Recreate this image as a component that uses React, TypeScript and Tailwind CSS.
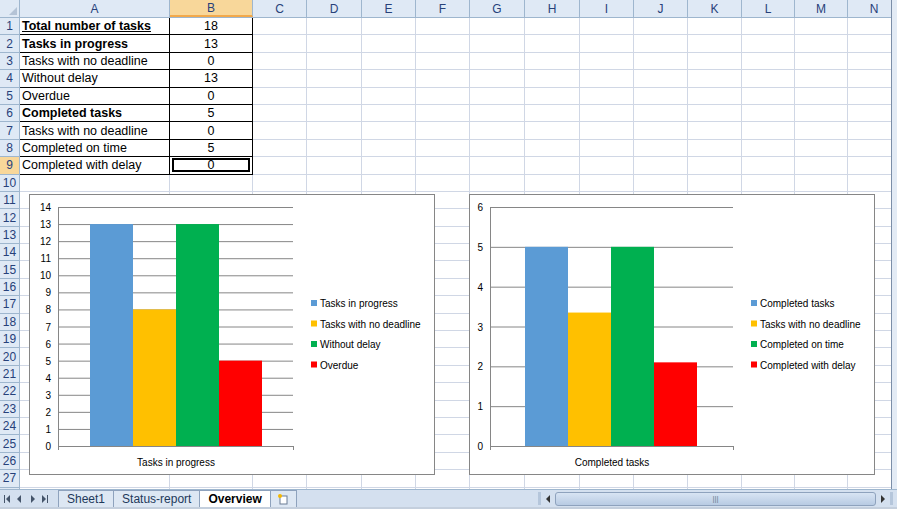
import React from "react";

const cols = ["A","B","C","D","E","F","G","H","I","J","K","L","M","N"];
const widths = [150,83,54,55,54,54,55,55,54,54,54,53,53,53];
const data: [string, string, boolean, boolean][] = [
  ["Total number of tasks","18",true,true],
  ["Tasks in progress","13",true,false],
  ["Tasks with no deadline","0",false,false],
  ["Without delay","13",false,false],
  ["Overdue","0",false,false],
  ["Completed tasks","5",true,false],
  ["Tasks with no deadline","0",false,false],
  ["Completed on time","5",false,false],
  ["Completed with delay","0",false,false],
];

function Chart({ max, step, vals, legend, label, left }: { max: number; step: number; vals: number[]; legend: string[]; label: string; left: number }) {
  const colors = ["#5b9bd5","#ffc000","#00b050","#ff0000"];
  const y0 = 251, top = 12;
  const unit = (y0 - top) / max;
  const ticks = [];
  for (let v = 0; v <= max; v += step) ticks.push(v);
  const ax = left === 29 ? 28 : 20;
  return (
    <div className="absolute bg-white border border-[#868686]" style={{ left, top: 194, width: 406, height: 281 }}>
      <svg width="406" height="281" style={{ fontFamily: "'Liberation Sans', Arial, sans-serif" }}>
        {ticks.map(v => (
          <g key={v}>
            <line x1={ax} x2="263" y1={y0 - v * unit + 0.5} y2={y0 - v * unit + 0.5} stroke="#868686" />
            <text x={ax - 7} y={y0 - v * unit + 4} fontSize="10" textAnchor="end" fill="#000">{v}</text>
          </g>
        ))}
        <line x1={ax + 0.5} x2={ax + 0.5} y1={top} y2={y0 + 4} stroke="#868686" />
        <line x1="263.5" x2="263.5" y1={y0} y2={y0 + 4} stroke="#868686" />
        {vals.map((v, i) => (
          <rect key={i} x={(left === 29 ? 60 : 55) + i * 43} y={y0 - v * unit} width="43" height={v * unit} fill={colors[i]} />
        ))}
        <text x={left === 29 ? 146 : 142} y="271" fontSize="10" textAnchor="middle" fill="#000">{label}</text>
        {legend.map((t, i) => (
          <g key={t}>
            <rect x="281" y={105 + i * 20.5} width="6" height="6" fill={colors[i]} />
            <text x="290" y={112 + i * 20.5} fontSize="10" fill="#000">{t}</text>
          </g>
        ))}
      </svg>
    </div>
  );
}

export default function App() {
  const rows = Array.from({ length: 28 }, (_, i) => i + 1);
  return (
    <div className="relative w-[897px] h-[509px] overflow-hidden bg-white" style={{ fontFamily: "'Liberation Sans', Arial, sans-serif" }}>
      <div className="flex flex-col h-[489px] overflow-hidden mr-[6px]">
        <div className="flex h-[18px] shrink-0 bg-[#dfe9f5] border-b border-[#9eb6ce]">
          <div className="w-[20px] shrink-0 border-r border-[#9eb6ce] relative">
            <div className="absolute right-[2px] bottom-[2px] w-0 h-0 border-l-[8px] border-l-transparent border-b-[8px] border-b-[#b4c3d6]" />
          </div>
          {cols.map((c, i) => (
            <div key={c} className={`shrink-0 border-r border-[#9eb6ce] flex items-center justify-center text-[12px] text-[#27417a] ${c === "B" ? "bg-[#f8d79a] border-b-2 border-b-[#f2a94b]" : ""}`} style={{ width: widths[i] }}>{c}</div>
          ))}
        </div>
        {rows.map(r => {
          const d = data[r - 1];
          return (
            <div key={r} className="flex h-[17.4px] shrink-0">
              <div className={`w-[20px] shrink-0 border-r border-b border-[#9eb6ce] flex items-center justify-center text-[12px] text-[#27417a] ${r === 9 ? "bg-[#f8d79a]" : "bg-[#dfe9f5]"}`}>{r}</div>
              {cols.map((c, i) => {
                const isTable = d && i < 2;
                return (
                  <div key={c} className={`shrink-0 border-r border-b ${isTable ? "border-black" : "border-[#d0d7e5]"} text-[12.5px] leading-[16px] text-black flex items-center overflow-hidden whitespace-nowrap ${i === 1 ? "justify-center" : "px-[2px]"}`} style={{ width: widths[i] }}>
                    {d && i === 0 && <span className={`${d[2] ? "font-bold" : ""} ${d[3] ? "underline" : ""}`}>{d[0]}</span>}
                    {d && i === 1 && (r === 9
                      ? <span className="w-[78px] h-[14px] border-2 border-black flex items-center justify-center leading-none">{d[1]}</span>
                      : <span>{d[1]}</span>)}
                  </div>
                );
              })}
            </div>
          );
        })}
      </div>
      <div className="absolute right-0 top-0 w-[6px] h-[489px] bg-[#e3ebf5] border-l border-[#7b8ea8]" />
      <Chart left={29} max={14} step={1} vals={[13,8,13,5]} legend={["Tasks in progress","Tasks with no deadline","Without delay","Overdue"]} label="Tasks in progress" />
      <Chart left={469} max={6} step={1} vals={[5,3.35,5,2.1]} legend={["Completed tasks","Tasks with no deadline","Completed on time","Completed with delay"]} label="Completed tasks" />
      <div className="absolute left-0 top-[489px] w-[897px] h-[18px] bg-[#d4e0ef] border-t border-[#9eb6ce] flex items-end text-[12px] text-[#1e395b]">
        <div className="w-[58px] h-[17px] flex items-center pl-[3px]">
          <svg width="52" height="10" viewBox="0 0 52 10" fill="#44546a">
            <rect x="1" y="1" width="1" height="8" /><path d="M7 1 L3 5 L7 9 Z" />
            <path d="M18 1 L14 5 L18 9 Z" />
            <path d="M28 1 L32 5 L28 9 Z" />
            <path d="M39 1 L43 5 L39 9 Z" /><rect x="44" y="1" width="1" height="8" />
          </svg>
        </div>
        <div className="h-[17px] px-[8px] flex items-center bg-[#dde7f3] border border-[#8ea2bd] border-b-0">Sheet1</div>
        <div className="h-[17px] px-[8px] flex items-center bg-[#dde7f3] border border-[#8ea2bd] border-b-0 border-l-0">Status-report</div>
        <div className="h-[17px] px-[8px] flex items-center bg-white font-bold text-black border border-[#8ea2bd] border-b-0 border-l-0">Overview</div>
        <div className="h-[17px] w-[26px] flex items-center justify-center bg-[#dde7f3] border border-[#8ea2bd] border-b-0 border-l-0">
          <svg width="12" height="12" viewBox="0 0 12 12"><rect x="3" y="3" width="7" height="8" fill="#fff" stroke="#6b7d95" /><circle cx="3" cy="3" r="2" fill="#f5b700" /></svg>
        </div>
        <div className="flex-1" />
        <div className="h-[17px] w-[355px] flex items-center gap-[2px] mr-[4px]">
          <div className="w-[3px] h-[13px] bg-[#b5c6db]" />
          <svg width="10" height="10" viewBox="0 0 10 10" fill="#333"><path d="M7 1 L3 5 L7 9 Z" /></svg>
          <div className="flex-1 h-[14px] rounded-[3px] bg-gradient-to-b from-[#d8e4f3] to-[#b8cbe3] border border-[#8ea2bd] flex items-center justify-center text-[8px] text-[#6b7d95]">|||</div>
          <svg width="10" height="10" viewBox="0 0 10 10" fill="#333"><path d="M3 1 L7 5 L3 9 Z" /></svg>
          <div className="w-[3px] h-[13px] bg-[#b5c6db]" />
        </div>
      </div>
      <div className="absolute left-0 top-[507px] w-[897px] h-[2px] bg-[#c4cfdd]" />
    </div>
  );
}
